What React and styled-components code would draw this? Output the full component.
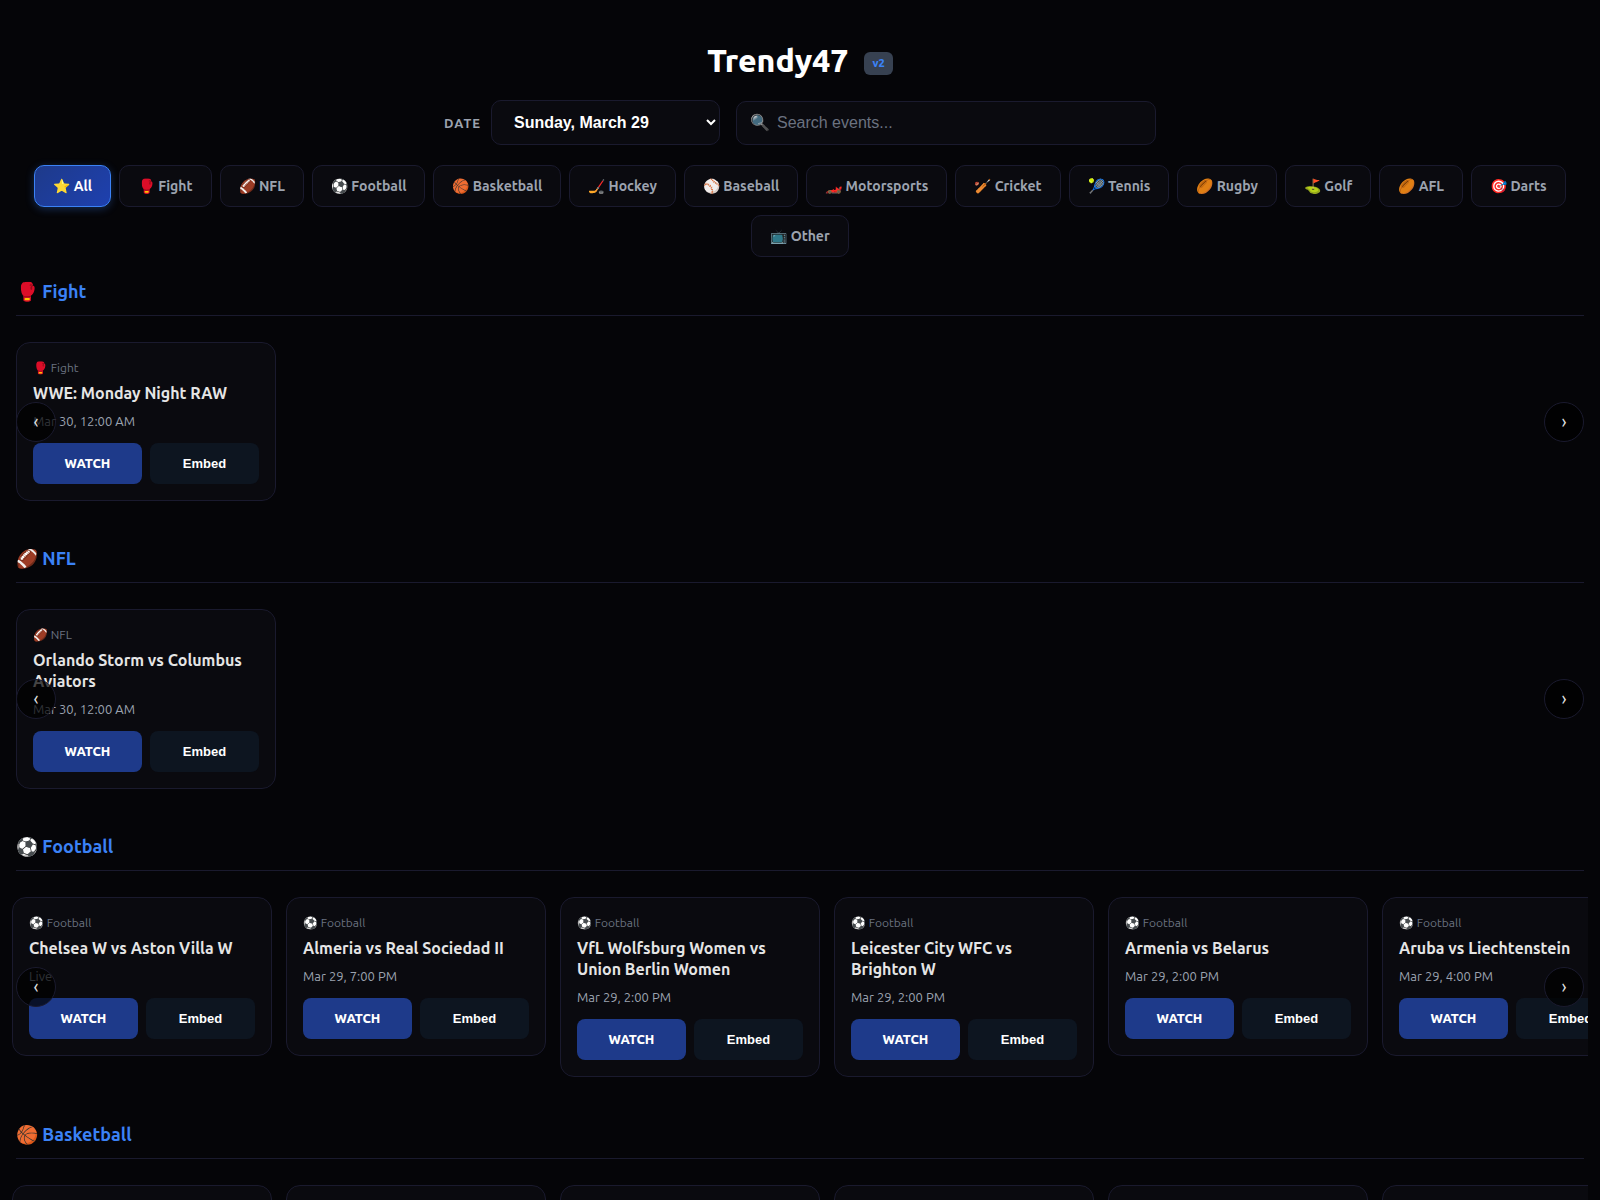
import { useRef, useState } from "react";
import styled, { createGlobalStyle } from "styled-components";

const categories = [
    { name: "All", icon: "⭐" },
    { name: "Fight", icon: "🥊" },
    { name: "NFL", icon: "🏈" },
    { name: "Football", icon: "⚽" },
    { name: "Basketball", icon: "🏀" },
    { name: "Hockey", icon: "🏒" },
    { name: "Baseball", icon: "⚾" },
    { name: "Motorsports", icon: "🏎️" },
    { name: "Cricket", icon: "🏏" },
    { name: "Tennis", icon: "🎾" },
    { name: "Rugby", icon: "🏉" },
    { name: "Golf", icon: "⛳" },
    { name: "AFL", icon: "🏉" },
    { name: "Darts", icon: "🎯" },
    { name: "Other", icon: "📺" },
];

const sections = [
    {
        name: "Fight",
        icon: "🥊",
        events: [{ title: "WWE: Monday Night RAW", time: "Mar 30, 12:00 AM" }],
    },
    {
        name: "NFL",
        icon: "🏈",
        events: [{ title: "Orlando Storm vs Columbus Aviators", time: "Mar 30, 12:00 AM" }],
    },
    {
        name: "Football",
        icon: "⚽",
        events: [
            { title: "Chelsea W vs Aston Villa W", time: "Live" },
            { title: "Almeria vs Real Sociedad II", time: "Mar 29, 7:00 PM" },
            { title: "VfL Wolfsburg Women vs Union Berlin Women", time: "Mar 29, 2:00 PM" },
            { title: "Leicester City WFC vs Brighton W", time: "Mar 29, 2:00 PM" },
            { title: "Armenia vs Belarus", time: "Mar 29, 2:00 PM" },
            { title: "Aruba vs Liechtenstein", time: "Mar 29, 4:00 PM" },
        ],
    },
    {
        name: "Basketball",
        icon: "🏀",
        events: [{}, {}, {}, {}, {}, {}],
    },
];

const Section = ({ section }) => {
    const rowRef = useRef(null);

    const scroll = (step) => {
        rowRef.current.scrollBy({ left: step * 274, behavior: "smooth" });
    };

    return (
        <SectionWrap>
            <SectionTitle>{section.icon} {section.name}</SectionTitle>
            <Carousel>
                <CardRow ref={rowRef}>
                    {section.events.map((event, i) => (
                        <Card key={i}>
                            {event.title && (
                                <>
                                    <Category>{section.icon} {section.name}</Category>
                                    <EventTitle>{event.title}</EventTitle>
                                    <Time>{event.time}</Time>
                                    <Actions>
                                        <WatchLink href="#watch">WATCH</WatchLink>
                                        <EmbedButton type="button">Embed</EmbedButton>
                                    </Actions>
                                </>
                            )}
                        </Card>
                    ))}
                </CardRow>
                <Arrow type="button" $side="left" aria-label="Previous" onClick={() => scroll(-1)}>‹</Arrow>
                <Arrow type="button" $side="right" aria-label="Next" onClick={() => scroll(1)}>›</Arrow>
            </Carousel>
        </SectionWrap>
    );
};

const App = () => {
    const [active, setActive] = useState("All");
    const shown = active === "All" ? sections : sections.filter((s) => s.name === active);

    return (
        <>
            <GlobalStyle />
            <Header>
                <Brand>
                    <Title>Trendy47</Title>
                    <Version>v2</Version>
                </Brand>
                <Controls>
                    <DateField>
                        <DateLabel htmlFor="date">Date</DateLabel>
                        <DateSelect id="date">
                            <option>Sunday, March 29</option>
                            <option>Monday, March 30</option>
                        </DateSelect>
                    </DateField>
                    <SearchBox>
                        <span aria-hidden="true">🔍</span>
                        <SearchInput type="text" aria-label="Search events" placeholder="Search events..." />
                    </SearchBox>
                </Controls>
                <Filters>
                    {categories.map((c) => (
                        <Pill key={c.name} type="button" $active={c.name === active} onClick={() => setActive(c.name)}>
                            {c.icon} {c.name}
                        </Pill>
                    ))}
                </Filters>
            </Header>
            <main>
                {shown.map((s) => (
                    <Section key={s.name} section={s} />
                ))}
            </main>
        </>
    );
};

export default App;

const GlobalStyle = createGlobalStyle`
    * {
        box-sizing: border-box;
    }

    html {
        scrollbar-width: none;
        background: #050508;
    }

    body {
        margin: 0;
        padding: 40px 16px;
        color: #e5e5e5;
        font-family: Ubuntu, "Noto Sans", sans-serif;
    }
`;

const Header = styled.header`
    display: flex;
    flex-direction: column;
    align-items: center;
    gap: 20px;
    margin-bottom: 22px;
`;

const Brand = styled.div`
    display: flex;
    align-items: center;
    gap: 16px;
`;

const Title = styled.h1`
    margin: 0;
    font-size: 32px;
    line-height: 40px;
    font-weight: 800;
    color: #fff;
`;

const Version = styled.span`
    margin-top: 6px;
    padding: 4px 8px;
    border-radius: 6px;
    background: #374151;
    color: #3b82f6;
    font-size: 11px;
    line-height: 15px;
    font-weight: 800;
`;

const Controls = styled.div`
    display: flex;
    align-items: center;
    gap: 16px;
`;

const DateField = styled.div`
    display: flex;
    align-items: center;
    gap: 10px;
`;

const DateLabel = styled.label`
    color: #9ca3af;
    font-size: 13px;
    font-weight: 600;
    letter-spacing: 1px;
    text-transform: uppercase;
`;

const DateSelect = styled.select`
    width: 229px;
    height: 45px;
    padding: 0 18px;
    border: 1px solid #1a1a2e;
    border-radius: 10px;
    background: #0a0a0f;
    color: #fff;
    font: 700 16px "Liberation Sans", sans-serif;
`;

const SearchBox = styled.label`
    display: flex;
    align-items: center;
    gap: 7px;
    width: 420px;
    height: 44px;
    padding: 0 13px;
    border: 1px solid #1a1a2e;
    border-radius: 10px;
    background: #0a0a0f;
    font-size: 16px;

    span {
        opacity: 0.8;
    }
`;

const SearchInput = styled.input`
    flex: 1;
    min-width: 0;
    padding: 0;
    border: none;
    outline: none;
    background: transparent;
    color: #fff;
    font: 16px "Liberation Sans", sans-serif;

    &::placeholder {
        color: #6b7280;
    }
`;

const Filters = styled.nav`
    display: flex;
    flex-wrap: wrap;
    justify-content: center;
    gap: 8px;
`;

const Pill = styled.button`
    padding: 12px 18px;
    border: 1px solid ${({ $active }) => ($active ? "#3b82f6" : "#1a1a2e")};
    border-radius: 10px;
    background: ${({ $active }) => ($active ? "linear-gradient(135deg, #1e3a8a, #1e40af)" : "#0a0a0f")};
    box-shadow: ${({ $active }) => ($active ? "0 2px 8px rgba(59, 130, 246, 0.3)" : "none")};
    color: ${({ $active }) => ($active ? "#fff" : "#9ca3af")};
    font-family: inherit;
    font-size: 14px;
    line-height: 16px;
    font-weight: 600;
    cursor: pointer;
`;

const SectionWrap = styled.section`
    margin-bottom: 45px;
`;

const SectionTitle = styled.h2`
    margin: 0 0 26px;
    padding-bottom: 12px;
    border-bottom: 1px solid #1a1a2e;
    color: #3b82f6;
    font-size: 18px;
    line-height: 24px;
    font-weight: 600;
`;

const Carousel = styled.div`
    position: relative;
`;

const CardRow = styled.div`
    display: flex;
    align-items: flex-start;
    gap: 14px;
    margin: 0 -4px;
    padding: 0 4px;
    overflow-x: auto;
    scroll-snap-type: x mandatory;
    scrollbar-width: none;
`;

const Card = styled.article`
    flex: 0 0 260px;
    min-height: 159px;
    padding: 16px;
    border: 1px solid #1a1a2e;
    border-radius: 14px;
    background: #0a0a0f;
    scroll-snap-align: start;
`;

const Category = styled.div`
    margin-bottom: 6px;
    color: #6b7280;
    font-size: 12px;
    line-height: 18px;
`;

const EventTitle = styled.h3`
    margin: 0 0 10px;
    color: #e5e5e5;
    font-size: 16px;
    line-height: 21px;
    font-weight: 600;
`;

const Time = styled.div`
    margin-bottom: 14px;
    color: #9ca3af;
    font-size: 13px;
    line-height: 15px;
`;

const Actions = styled.div`
    display: flex;
    gap: 8px;
`;

const WatchLink = styled.a`
    flex: 1;
    padding: 13px 0;
    border-radius: 8px;
    background: #1e3a8a;
    color: #fff;
    font-size: 13px;
    line-height: 15px;
    font-weight: 800;
    text-align: center;
    text-decoration: none;
`;

const EmbedButton = styled.button`
    flex: 1;
    padding: 0;
    border: none;
    border-radius: 8px;
    background: #0d1520;
    color: #fff;
    font: 700 13px "Liberation Sans", sans-serif;
    cursor: pointer;
`;

const Arrow = styled.button`
    position: absolute;
    top: 50%;
    ${({ $side }) => $side}: 0;
    transform: translateY(-50%);
    width: 40px;
    height: 40px;
    padding: 0 0 2px;
    border: 1px solid #1a1a2e;
    border-radius: 50%;
    background: rgba(0, 0, 0, 0.7);
    color: #e5e5e5;
    font: 18px Ubuntu, "Liberation Sans", sans-serif;
    cursor: pointer;
`;
